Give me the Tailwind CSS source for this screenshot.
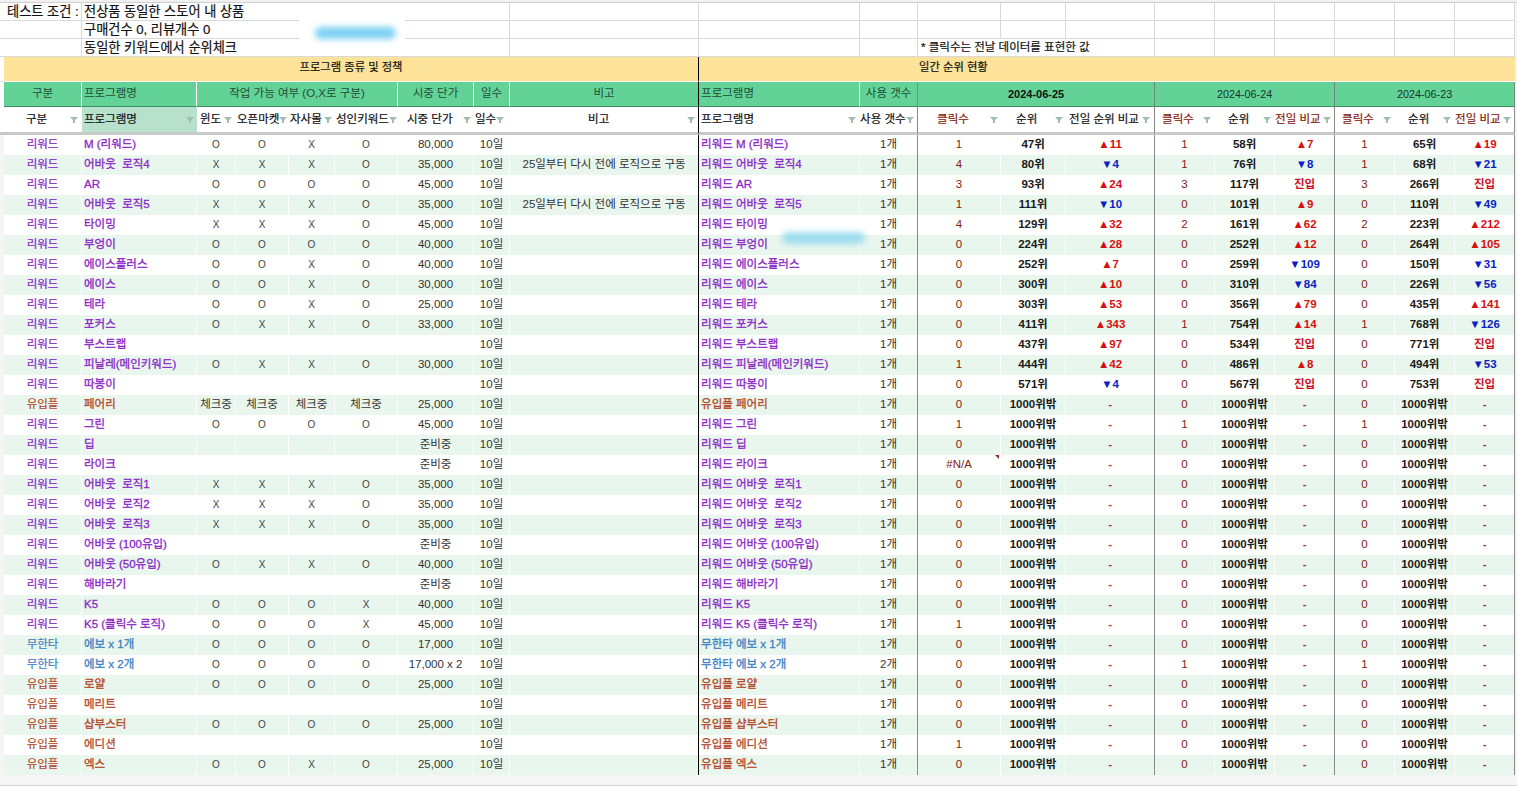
<!DOCTYPE html>
<html lang="ko"><head><meta charset="utf-8">
<script src="https://cdn.jsdelivr.net/npm/@tailwindcss/browser@4"></script>
</head>
<body class="bg-white">
<div class="relative w-[1517px] h-[786px] overflow-hidden bg-[#f6f6f6] border-b border-[#d5d5d5] font-['Liberation_Sans','Noto_Sans_CJK_KR',sans-serif] text-[11.5px] text-[#222] leading-none">
<div class="h-[3px] bg-[#f1f1f1] border-b border-[#cfcfcf]"></div>
<table class="table-fixed border-separate border-spacing-0 w-[1515px] bg-white">
<colgroup>
<col class="w-[4px]"><col class="w-[78px]"><col class="w-[115px]"><col class="w-[39px]"><col class="w-[53px]"><col class="w-[46px]"><col class="w-[63px]"><col class="w-[76px]"><col class="w-[36px]"><col class="w-[189px]"><col class="w-[161px]"><col class="w-[58px]"><col class="w-[83px]"><col class="w-[65px]"><col class="w-[89px]"><col class="w-[60px]"><col class="w-[60px]"><col class="w-[60px]"><col class="w-[60px]"><col class="w-[60px]"><col class="w-[60px]">
</colgroup>
<thead id="head" class="font-normal"></thead>
<tbody id="body"></tbody>
</table>
<div class="absolute left-[299px] top-[19px] w-[106px] h-[21px] bg-white"></div>
<div class="absolute left-[315px] top-[27px] w-[81px] h-[12px] bg-[#7cd0f2] blur-[3px] rounded-full"></div>
<div class="absolute left-[782px] top-[232px] w-[83px] h-[12px] bg-[#9edcef] blur-[3px] rounded-full"></div>
</div>
<script>
const line='border-b border-r border-[#d9d9d9]';
const top1=(a,b,c)=>`<tr class="h-[18px]"><td class="border-b border-[#d9d9d9]"></td><td class="${line} pl-[3px] pt-[1px] text-[13.2px] [-webkit-text-stroke:0.2px] text-[#111] whitespace-nowrap">${a}</td><td colspan="7" class="${line} pl-[2px] pt-[1px] text-[13.2px] [-webkit-text-stroke:0.2px] text-[#111] whitespace-nowrap">${b}</td>`+c+`</tr>`;
const e=`<td class="${line}"></td>`;
const rest=e+e+e+e+e+e+e+e+e+e+e+e;
const note=e+e+e+`<td colspan="3" class="${line} pl-[3px] pt-[1px] text-[11.5px] [-webkit-text-stroke:0.2px] text-[#111] whitespace-nowrap">* 클릭수는 전날 데이터를 표현한 값</td>`+e+e+e+e+e+e;
const g='text-center text-[#1f4d36] bg-[#63d297] border-b border-[#3b8d63] border-r whitespace-nowrap';
const funnel='<svg class="shrink-0" width="8" height="6" viewBox="0 0 8 6"><path d="M0 0h8L5 3.2V6H3V3.2z" fill="#a3bdaf"/></svg>';
const fh=[
['구분','pl-[22px] pr-[4px]','text-[#111]',''],
['프로그램명','pl-[2px] pr-[3px]','text-[#111]','bg-[#b7e1cd]'],
['윈도','pl-[3px] pr-[4px]','text-[#111]',''],
['오픈마켓','pl-[1px] pr-[3px]','text-[#111]',''],
['자사몰','pl-[1px] pr-[3px]','text-[#111]',''],
['성인키워드','pl-[1px] pr-[3px]','text-[#111]',''],
['시중 단가','pl-[9px] pr-[3px]','text-[#111]',''],
['일수','pl-[1px] pr-[6px]','text-[#111]',''],
['비고','pl-[78px] pr-[3px]','text-[#111]',''],
['프로그램명','pl-[2px] pr-[4px]','text-[#111]',''],
['사용 갯수','pl-[0px] pr-[3px]','text-[#111]',''],
['클릭수','pl-[19px] pr-[3px]','text-[#85200c]',''],
['순위','pl-[15px] pr-[3px]','text-[#111]',''],
['전일 순위 비교','pl-[3px] pr-[4px]','text-[#111]',''],
['클릭수','pl-[7px] pr-[4px]','text-[#85200c]',''],
['순위','pl-[13px] pr-[4px]','text-[#111]',''],
['전일 비교','pl-[0px] pr-[3px]','text-[#85200c]',''],
['클릭수','pl-[7px] pr-[4px]','text-[#85200c]',''],
['순위','pl-[13px] pr-[4px]','text-[#111]',''],
['전일 비교','pl-[0px] pr-[3px]','text-[#85200c]','']];
const rightB=i=>i==8?'border-r border-black':(i==10||i==13||i==16||i==19)?'border-r border-[#8a8a8a]':'';
const filterRow=fh.map((h,i)=>`<td class="${h[3]} ${rightB(i)} border-b-[3px] border-b-[#c9c9c9] p-0"><div class="flex items-center justify-between ${h[1]} whitespace-nowrap [-webkit-text-stroke:0.2px] ${h[2]}"><span>${h[0]}</span>${funnel}</div></td>`).join('');
document.getElementById('head').innerHTML=
top1('테스트 조건 :','전상품 동일한 스토어 내 상품',rest)+
top1('','구매건수 0, 리뷰개수 0',rest)+
top1('','동일한 키워드에서 순위체크',note)+
`<tr class="h-[25px]"><td class="border-b border-[#cfe8dc]"></td><td colspan="9" class="bg-[#fde29a] border-r border-black border-b border-b-white text-center pb-[3px] [-webkit-text-stroke:0.2px] text-[11.3px] text-[#111]">프로그램 종류 및 정책</td><td colspan="11" class="bg-[#fde29a] border-b border-b-white pb-[3px] [-webkit-text-stroke:0.2px] text-[11.3px] text-[#111]"><div class="pl-[220px]">일간 순위 현황</div></td></tr>`+
`<tr class="h-[25px]"><td class=""></td><td class="${g} border-r-white">구분</td><td class="${g} border-r-white !text-left pl-[2px]">프로그램명</td><td colspan="4" class="${g} border-r-white">작업 가능 여부 (O,X로 구분)</td><td class="${g} border-r-white">시중 단가</td><td class="${g} border-r-white">일수</td><td class="${g} border-r-black">비고</td><td class="${g} border-r-white !text-left pl-[2px]">프로그램명</td><td class="${g} border-r-[#8a8a8a]">사용 갯수</td><td colspan="3" class="${g} border-r-[#6b8a78] font-bold !text-[#111] text-[11px]">2024-06-25</td><td colspan="3" class="${g} border-r-[#6b8a78] !text-[#14352a] text-[10.8px]">2024-06-24</td><td colspan="3" class="${g} border-r-[#6b8a78] !text-[#14352a] text-[10.8px]">2024-06-23</td></tr>`+
`<tr class="h-[28px]"><td class="border-b-[3px] border-b-[#c9c9c9]"></td>${filterRow}</tr>`;

const R='리워드',Y='유입플',M='무한타';
const P='25일부터 다시 전에 로직으로 구동';
const out=['1000위밖','-'];
const data=[
[R,'M (리워드)','OOXO','80,000','',[1,'47위','▲11',1,'58위','▲7',1,'65위','▲19']],
[R,'어바웃&nbsp; 로직4','XXXO','35,000',P,[4,'80위','▼4',1,'76위','▼8',1,'68위','▼21']],
[R,'AR','OOOO','45,000','',[3,'93위','▲24',3,'117위','진입',3,'266위','진입']],
[R,'어바웃&nbsp; 로직5','XXXO','35,000',P,[1,'111위','▼10',0,'101위','▲9',0,'110위','▼49']],
[R,'타이밍','XXXO','45,000','',[4,'129위','▲32',2,'161위','▲62',2,'223위','▲212']],
[R,'부엉이','OOOO','40,000','',[0,'224위','▲28',0,'252위','▲12',0,'264위','▲105']],
[R,'에이스플러스','OOXO','40,000','',[0,'252위','▲7',0,'259위','▼109',0,'150위','▼31']],
[R,'에이스','OOXO','30,000','',[0,'300위','▲10',0,'310위','▼84',0,'226위','▼56']],
[R,'테라','OOXO','25,000','',[0,'303위','▲53',0,'356위','▲79',0,'435위','▲141']],
[R,'포커스','OXXO','33,000','',[0,'411위','▲343',1,'754위','▲14',1,'768위','▼126']],
[R,'부스트랩','','','',[0,'437위','▲97',0,'534위','진입',0,'771위','진입']],
[R,'피날레(메인키워드)','OXXO','30,000','',[1,'444위','▲42',0,'486위','▲8',0,'494위','▼53']],
[R,'따봉이','','','',[0,'571위','▼4',0,'567위','진입',0,'753위','진입']],
[Y,'페어리','CCCC','25,000','',[0,0,0]],
[R,'그린','OOOO','45,000','',[1,1,1]],
[R,'딥','','준비중','',[0,0,0]],
[R,'라이크','','준비중','',['#N/A',0,0]],
[R,'어바웃&nbsp; 로직1','XXXO','35,000','',[0,0,0]],
[R,'어바웃&nbsp; 로직2','XXXO','35,000','',[0,0,0]],
[R,'어바웃&nbsp; 로직3','XXXO','35,000','',[0,0,0]],
[R,'어바웃 (100유입)','','준비중','',[0,0,0]],
[R,'어바웃 (50유입)','OXXO','40,000','',[0,0,0]],
[R,'해바라기','','준비중','',[0,0,0]],
[R,'K5','OOOX','40,000','',[0,0,0]],
[R,'K5 (클릭수 로직)','OOOX','45,000','',[1,0,0]],
[M,'에보 x 1개','OOOO','17,000','',[0,0,0]],
[M,'에보 x 2개','OOOO','17,000 x 2','',[0,1,1],'2개'],
[Y,'로얄','OOOO','25,000','',[0,0,0]],
[Y,'메리트','','','',[0,0,0]],
[Y,'샵부스터','OOOO','25,000','',[0,0,0]],
[Y,'에디션','','','',[1,0,0]],
[Y,'엑스','OOXO','25,000','',[0,0,0]]];
const col={[R]:'text-[#8a26c6]',[Y]:'text-[#b4492a]',[M]:'text-[#3d7fc4]'};
const cmp=v=>v[0]=='▲'?'text-[#d90f0f]':v[0]=='▼'?'text-[#0a1fc4]':v=='진입'?'text-[#d0102a]':'text-[#a33]';
document.getElementById('body').innerHTML=data.map((d,i)=>{
  const bg=i%2?'bg-[#e8f6ee]':'bg-white';
  const td=(t,c,b)=>`<td class="${bg} border-r ${b||'border-r-white'} ${c} whitespace-nowrap overflow-hidden">${t}</td>`;
  const n=d[5].length==3?[d[5][0],...out,d[5][1],...out,d[5][2],...out]:d[5];
  const marks=[0,1,2,3].map(k=>{
    const m=d[2][k];
    if(!m) return td('','');
    if(m=='C') return td('체크중','text-center text-[#333]');
    return td(m,'text-center text-[10px] text-[#444]');
  }).join('');
  const cells=n.map((v,k)=>{
    const m=k%3;
    const border=(k==2||k==5||k==8)?'border-r-[#8a8a8a]':'';
    if(m==0){
      const tri=v==='#N/A'?'<span class="absolute top-0 right-[1px] w-0 h-0 border-t-[4px] border-t-[#a32424] border-l-[4px] border-l-transparent"></span>':'';
      return `<td class="relative ${bg} border-r border-r-white text-center text-[#85200c]">${v}${tri}</td>`;
    }
    if(m==1) return td(v,'text-center font-semibold text-[#1a1a1a]');
    return td(v,'text-center font-semibold '+cmp(v),border);
  }).join('');
  return `<tr class="h-[20px]"><td class="bg-[#f5f5f5]"></td>`+
   td(d[0],'text-center [-webkit-text-stroke:0.2px] '+col[d[0]])+
   td(d[1],'pl-[2px] [-webkit-text-stroke:0.3px] '+col[d[0]])+
   marks+
   td(d[3],'text-center text-[#333]')+
   td('10일','text-center text-[#333]')+
   td(d[4],'text-center text-[#333]','border-r-black')+
   td(d[0]+' '+d[1],'pl-[2px] [-webkit-text-stroke:0.3px] '+col[d[0]])+
   td(d[6]||'1개','text-center text-[#333]','border-r-[#8a8a8a]')+
   cells+`</tr>`;
}).join('');
</script>
</body></html>
